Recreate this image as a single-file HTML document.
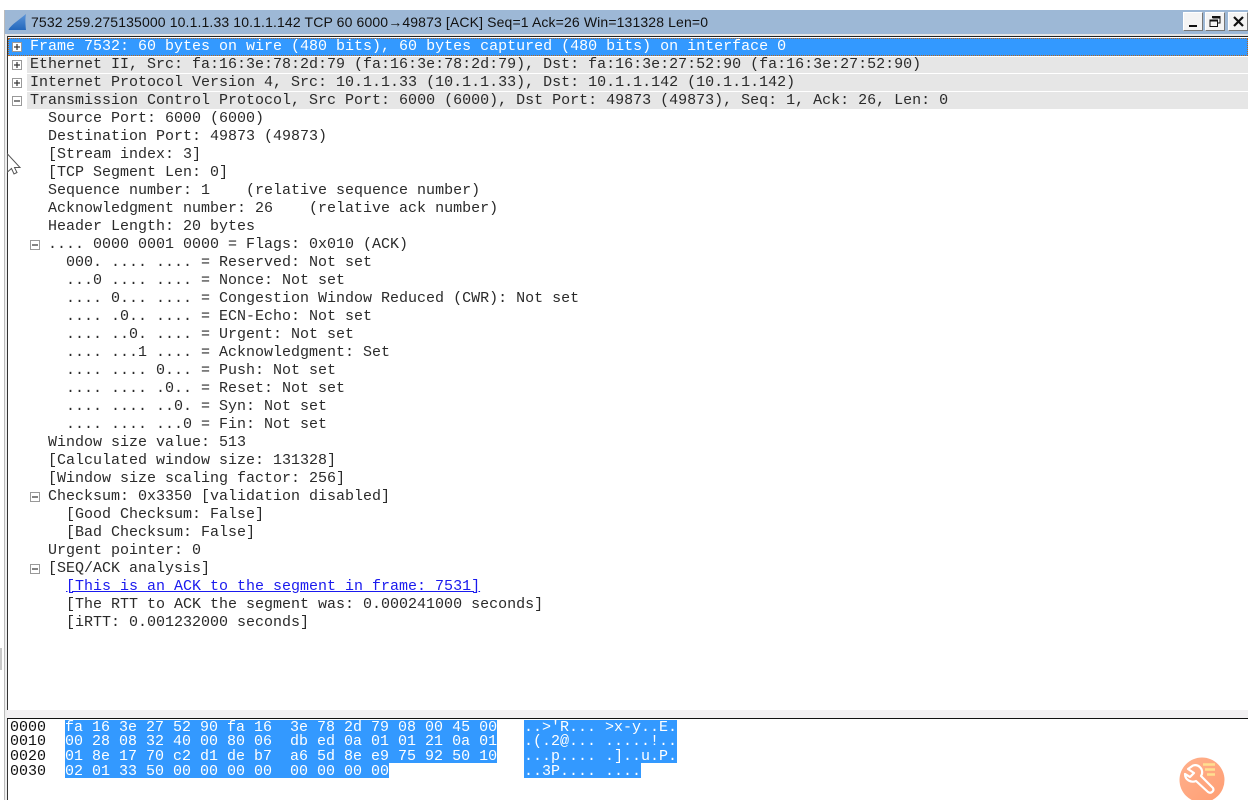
<!DOCTYPE html>
<html><head><meta charset="utf-8">
<style>
html,body{margin:0;padding:0;background:#fff;width:1248px;height:800px;overflow:hidden}
#p{position:relative;width:1248px;height:800px;overflow:hidden;font-family:"Liberation Mono",monospace;font-size:15px;color:#2a2a2a;filter:blur(.3px)}
.a{position:absolute}
.t{position:absolute;white-space:pre;line-height:18px;height:18px}
.bg{position:absolute;left:27px;right:0;height:17px;background:#e6e6e6}
.b{position:absolute;width:8px;height:8px;border:1px solid #999;background:#fff}
.b:before{content:"";position:absolute;left:1px;top:3px;width:6px;height:2px;background:#333;transform:scaleY(.6)}
.b.pl:after{content:"";position:absolute;left:3px;top:1px;width:2px;height:6px;background:#333;transform:scaleX(.6)}
.h{position:absolute;white-space:pre;line-height:15px;height:15px;color:#fff}
.o{position:absolute;white-space:pre;line-height:15px;height:15px;color:#111;left:10px}
.btn{position:absolute;top:12px;width:20px;height:19px;background:#f4f4f4;border:1px solid;border-color:#fff #777 #777 #fff;box-sizing:border-box}
</style></head><body><div id="p">

<div class="a" style="left:5px;top:10px;width:1243px;height:24px;background:#9db8d6"></div>
<div class="a" style="left:5px;top:34px;width:1243px;height:2px;background:#e4e4e4"></div>
<div class="a" style="left:7px;top:36px;width:1241px;height:1px;background:#222"></div>
<div class="a" style="left:4px;top:10px;width:1px;height:790px;background:#bbb"></div>
<div class="a" style="left:5px;top:34px;width:2px;height:766px;background:#eee"></div>
<div class="a" style="left:7px;top:36px;width:1px;height:674px;background:#333"></div>
<div class="a" style="left:0;top:648px;width:2px;height:22px;background:#c8c8c8"></div>

<svg class="a" style="left:8px;top:12px" width="20" height="20" viewBox="0 0 20 20"><defs><linearGradient id="g" x1="0" y1="0" x2="0" y2="1"><stop offset="0" stop-color="#5a94d8"/><stop offset="1" stop-color="#2468bc"/></linearGradient></defs><path d="M.5 17.500C4 12 11 8 18 2C17 7 17.500 13 18 18H1Z" fill="url(#g)"/></svg>
<div class="t" style="left:31px;top:13px;font:14px/18px 'Liberation Sans',sans-serif;color:#111;letter-spacing:.13px">7532 259.275135000 10.1.1.33 10.1.1.142 TCP 60 6000→49873 [ACK] Seq=1 Ack=26 Win=131328 Len=0</div>

<div class="btn" style="left:1183px"><div class="a" style="left:5px;top:12px;width:8px;height:2px;background:#111"></div></div>
<div class="btn" style="left:1205px"><svg class="a" style="left:3px;top:2px" width="12" height="13" viewBox="0 0 12 13" fill="none" stroke="#111"><path d="M3.5 3V1.5H11V8H8.5"/><path d="M3.5 2.5H11" stroke-width="2"/><rect x="1" y="5" width="7.5" height="6.5"/><path d="M1 5.5H8.5" stroke-width="2"/></svg></div>
<div class="btn" style="left:1228px"><svg class="a" style="left:4px;top:3px" width="11" height="11" viewBox="0 0 11 11" stroke="#111" stroke-width="2.2"><path d="M1 1L10 10M10 1L1 10"/></svg></div>

<div class="a" style="left:8px;top:38px;width:1240px;height:18px;background:#3399ff;outline:1px dotted #b5651d;outline-offset:-1px"></div>
<div class="bg" style="top:57px;height:16px"></div>
<div class="bg" style="top:74px"></div>
<div class="bg" style="top:92px"></div>

<div class="b pl" style="left:12px;top:42px"></div>
<div class="b pl" style="left:12px;top:60px"></div>
<div class="b pl" style="left:12px;top:78px"></div>
<div class="b" style="left:12px;top:96px"></div>
<div class="b" style="left:30px;top:240px"></div>
<div class="b" style="left:30px;top:492px"></div>
<div class="b" style="left:30px;top:564px"></div>

<div class="t" style="left:30px;top:38px;color:#fff">Frame 7532: 60 bytes on wire (480 bits), 60 bytes captured (480 bits) on interface 0</div>
<div class="t" style="left:30px;top:56px">Ethernet II, Src: fa:16:3e:78:2d:79 (fa:16:3e:78:2d:79), Dst: fa:16:3e:27:52:90 (fa:16:3e:27:52:90)</div>
<div class="t" style="left:30px;top:74px">Internet Protocol Version 4, Src: 10.1.1.33 (10.1.1.33), Dst: 10.1.1.142 (10.1.1.142)</div>
<div class="t" style="left:30px;top:92px">Transmission Control Protocol, Src Port: 6000 (6000), Dst Port: 49873 (49873), Seq: 1, Ack: 26, Len: 0</div>
<div class="t" style="left:48px;top:110px">Source Port: 6000 (6000)</div>
<div class="t" style="left:48px;top:128px">Destination Port: 49873 (49873)</div>
<div class="t" style="left:48px;top:146px">[Stream index: 3]</div>
<div class="t" style="left:48px;top:164px">[TCP Segment Len: 0]</div>
<div class="t" style="left:48px;top:182px">Sequence number: 1    (relative sequence number)</div>
<div class="t" style="left:48px;top:200px">Acknowledgment number: 26    (relative ack number)</div>
<div class="t" style="left:48px;top:218px">Header Length: 20 bytes</div>
<div class="t" style="left:48px;top:236px">.... 0000 0001 0000 = Flags: 0x010 (ACK)</div>
<div class="t" style="left:66px;top:254px">000. .... .... = Reserved: Not set</div>
<div class="t" style="left:66px;top:272px">...0 .... .... = Nonce: Not set</div>
<div class="t" style="left:66px;top:290px">.... 0... .... = Congestion Window Reduced (CWR): Not set</div>
<div class="t" style="left:66px;top:308px">.... .0.. .... = ECN-Echo: Not set</div>
<div class="t" style="left:66px;top:326px">.... ..0. .... = Urgent: Not set</div>
<div class="t" style="left:66px;top:344px">.... ...1 .... = Acknowledgment: Set</div>
<div class="t" style="left:66px;top:362px">.... .... 0... = Push: Not set</div>
<div class="t" style="left:66px;top:380px">.... .... .0.. = Reset: Not set</div>
<div class="t" style="left:66px;top:398px">.... .... ..0. = Syn: Not set</div>
<div class="t" style="left:66px;top:416px">.... .... ...0 = Fin: Not set</div>
<div class="t" style="left:48px;top:434px">Window size value: 513</div>
<div class="t" style="left:48px;top:452px">[Calculated window size: 131328]</div>
<div class="t" style="left:48px;top:470px">[Window size scaling factor: 256]</div>
<div class="t" style="left:48px;top:488px">Checksum: 0x3350 [validation disabled]</div>
<div class="t" style="left:66px;top:506px">[Good Checksum: False]</div>
<div class="t" style="left:66px;top:524px">[Bad Checksum: False]</div>
<div class="t" style="left:48px;top:542px">Urgent pointer: 0</div>
<div class="t" style="left:48px;top:560px">[SEQ/ACK analysis]</div>
<div class="t" style="left:66px;top:578px;color:#1a1aee;text-decoration:underline">[This is an ACK to the segment in frame: 7531]</div>
<div class="t" style="left:66px;top:596px">[The RTT to ACK the segment was: 0.000241000 seconds]</div>
<div class="t" style="left:66px;top:614px">[iRTT: 0.001232000 seconds]</div>

<svg class="a" style="left:6px;top:153px" width="16" height="24" viewBox="0 0 16 24"><path d="M1.5 1V19L5.5 15.5L8 21L11 19.5L8.5 14.5H14Z" fill="#fff" stroke="#555"/></svg>

<div class="a" style="left:7px;top:710px;width:1241px;height:8px;background:#f2f0f2"></div>
<div class="a" style="left:7px;top:718px;width:1241px;height:1px;background:#111"></div>
<div class="a" style="left:7px;top:719px;width:1px;height:81px;background:#333"></div>

<div class="a" style="left:65px;top:720px;width:432px;height:43px;background:#3399ff"></div>
<div class="a" style="left:65px;top:763px;width:324px;height:15px;background:#3399ff"></div>
<div class="a" style="left:524px;top:720px;width:153px;height:43px;background:#3399ff"></div>
<div class="a" style="left:524px;top:763px;width:117px;height:15px;background:#3399ff"></div>

<div class="o" style="top:720px">0000</div>
<div class="o" style="top:734px">0010</div>
<div class="o" style="top:749px">0020</div>
<div class="o" style="top:764px">0030</div>

<div class="h" style="left:65px;top:720px">fa 16 3e 27 52 90 fa 16  3e 78 2d 79 08 00 45 00</div>
<div class="h" style="left:65px;top:734px">00 28 08 32 40 00 80 06  db ed 0a 01 01 21 0a 01</div>
<div class="h" style="left:65px;top:749px">01 8e 17 70 c2 d1 de b7  a6 5d 8e e9 75 92 50 10</div>
<div class="h" style="left:65px;top:764px">02 01 33 50 00 00 00 00  00 00 00 00</div>

<div class="h" style="left:524px;top:720px">..&gt;'R... &gt;x-y..E.</div>
<div class="h" style="left:524px;top:734px">.(.2@... .....!..</div>
<div class="h" style="left:524px;top:749px">...p.... .]..u.P.</div>
<div class="h" style="left:524px;top:764px">..3P.... ....</div>

<svg class="a" style="left:1170px;top:750px" width="70" height="50" viewBox="0 0 70 50">
<defs><linearGradient id="o" x1="0" y1="0" x2="1" y2="1"><stop offset="0" stop-color="#ffb08c"/><stop offset="1" stop-color="#ff9e73"/></linearGradient></defs>
<circle cx="32" cy="30" r="22.5" fill="url(#o)"/>
<path d="M33 14.500H45M35 19.500H45M37 24.500H45" stroke="#ffdf90" stroke-width="2.500" fill="none"/>
<path d="M18 19L23 15.500C28 14 33 18 32 24L31 26L43 38C44.500 41 41 44 38 42L26 31C21 33 15 30 15 24L20 27L24 23Z" fill="none" stroke="#fff" stroke-width="2.200" stroke-linejoin="round"/>
</svg>

</div></body></html>
